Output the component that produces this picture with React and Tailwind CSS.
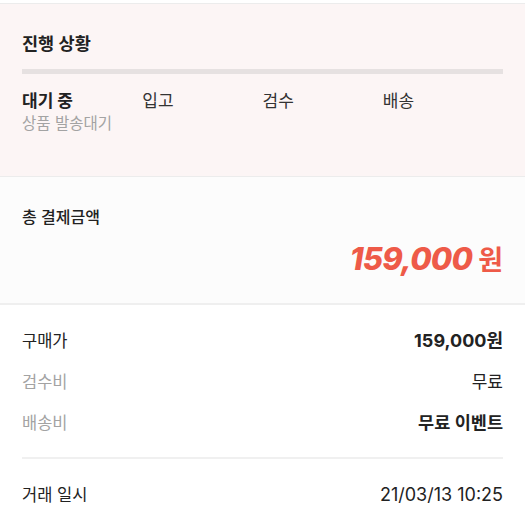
import React from 'react';

const font = { fontFamily: 'Inter, "Noto Sans CJK KR", sans-serif' };

const steps = [
  { label: '대기 중', sub: '상품 발송대기', active: true },
  { label: '입고' },
  { label: '검수' },
  { label: '배송' },
];

const rows = [
  { label: '구매가', value: '159,000원', labelClass: 'text-[#222]', valueClass: 'text-[18px] font-bold text-[#222]' },
  { label: '검수비', value: '무료', labelClass: 'text-[#a3a3a3]', valueClass: 'text-[17px] text-[#222]' },
  { label: '배송비', value: '무료 이벤트', labelClass: 'text-[#a3a3a3]', valueClass: 'text-[17.5px] font-semibold text-[#222]' },
];

export default function App() {
  return (
    <div className="w-[525px] h-[525px] overflow-hidden bg-white" style={font}>
      <div className="h-1 bg-white border-b border-[#ececec]" />

      {/* 진행 상황 */}
      <section className="bg-[#fcf5f5] px-[22px] pt-[28px] h-[173px] border-b border-[#ececec]">
        <h2 className="text-[17.5px] leading-6 font-semibold text-[#222]">진행 상황</h2>
        <div className="mt-[13px] h-[5px] bg-[#e6e1e1]" />
        <div className="mt-[15px] grid grid-cols-4">
          {steps.map((s) => (
            <div key={s.label}>
              <p className={`text-[17px] leading-6 ${s.active ? 'font-bold text-[#222]' : 'text-[#333]'}`}>{s.label}</p>
              {s.sub && <p className="text-[15.5px] leading-[22px] text-[#a3a3a3]">{s.sub}</p>}
            </div>
          ))}
        </div>
      </section>

      {/* 총 결제금액 */}
      <section className="bg-[#fcfcfc] px-[22px] pt-[28px] h-[128px] border-b-2 border-[#efefef]">
        <h2 className="text-[16px] leading-6 font-medium text-[#222]">총 결제금액</h2>
        <div className="mt-[12px] flex justify-end items-baseline gap-[6px] text-[#ee5a48]">
          <span className="text-[31px] leading-9 font-extrabold italic tracking-tight">159,000</span>
          <span className="text-[27px] leading-9 font-bold">원</span>
        </div>
      </section>

      {/* 상세 */}
      <section className="px-[22px] pt-[24px]">
        <div className="flex flex-col gap-[17px]">
          {rows.map((r) => (
            <div key={r.label} className="flex justify-between items-center text-[16.5px] leading-6">
              <span className={r.labelClass}>{r.label}</span>
              <span className={r.valueClass}>{r.value}</span>
            </div>
          ))}
        </div>
        <div className="mt-[22px] h-[2px] bg-[#f0f0f0]" />
        <div className="mt-[24px] flex justify-between items-center text-[16.5px] leading-6 text-[#222]">
          <span>거래 일시</span>
          <span className="text-[18px]">21/03/13 10:25</span>
        </div>
      </section>
    </div>
  );
}
